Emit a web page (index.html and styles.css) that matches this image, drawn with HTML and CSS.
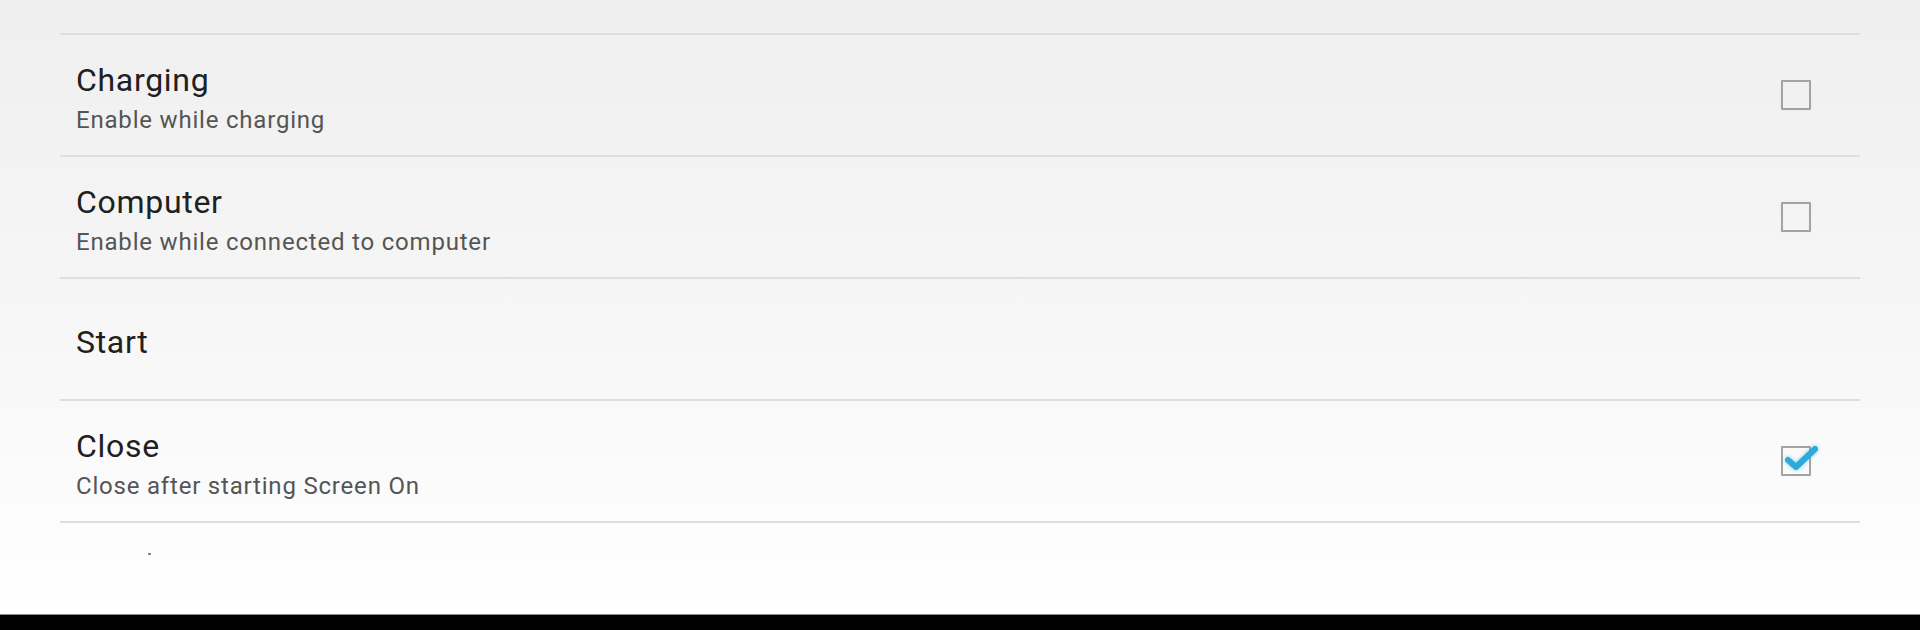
FILE: index.html
```html
<!DOCTYPE html>
<html>
<head>
<meta charset="utf-8">
<link rel="stylesheet" href="styles.css">
</head>
<body>
<div class="screen">
  <div class="content">
    <ul class="prefs">
      <li class="pref">
        <div class="text">
          <div class="title">Charging</div>
          <div class="summary">Enable while charging</div>
        </div>
        <div class="checkbox"></div>
      </li>
      <li class="pref">
        <div class="text">
          <div class="title">Computer</div>
          <div class="summary">Enable while connected to computer</div>
        </div>
        <div class="checkbox"></div>
      </li>
      <li class="pref">
        <div class="text">
          <div class="title">Start</div>
        </div>
      </li>
      <li class="pref">
        <div class="text">
          <div class="title">Close</div>
          <div class="summary">Close after starting Screen On</div>
        </div>
        <div class="checkbox checked">
          <svg class="check" width="42" height="36" viewBox="0 0 42 36">
            <path d="M7 16 L15 23 L34 5" fill="none" stroke="#2ea9dc" stroke-width="6" stroke-linecap="round" stroke-linejoin="round"/>
          </svg>
        </div>
      </li>
      <li class="pref partial">
        <span class="dot"></span>
      </li>
    </ul>
  </div>
  <div class="navbar"></div>
</div>
</body>
</html>
```
FILE: styles.css
```css
html, body {
  margin: 0;
  padding: 0;
}
body {
  width: 1920px;
  height: 630px;
  overflow: hidden;
  font-family: Roboto, "Noto Sans", sans-serif;
}
.screen {
  display: flex;
  flex-direction: column;
  height: 630px;
}
.content {
  height: 614px;
  overflow: hidden;
  background: linear-gradient(180deg, #efefef 0%, #f6f6f6 50%, #ffffff 100%);
  padding-top: 33px;
  box-sizing: border-box;
}
.navbar {
  height: 16px;
  background: #000;
  border-top: 1px solid #8c8c8c;
  box-sizing: border-box;
}
.prefs {
  list-style: none;
  margin: 0 60px;
  padding: 0;
  border-top: 2px solid #dedede;
}
.pref {
  height: 120px;
  border-bottom: 2px solid #dedede;
  display: flex;
  align-items: center;
  padding-left: 16px;
  padding-right: 49px;
}
.text {
  flex: 1;
  padding-top: 6px;
}
.title {
  font-size: 32px;
  line-height: 40px;
  letter-spacing: 0.7px;
  color: #202020;
}
.summary {
  font-size: 24px;
  line-height: 32px;
  letter-spacing: 0.8px;
  color: #555555;
  margin-top: 4px;
}
.checkbox {
  width: 30px;
  height: 30px;
  box-sizing: border-box;
  border: 2px solid #a3a3a3;
  border-radius: 1px;
  position: relative;
  box-shadow: 0 0 1px rgba(0,0,0,0.15);
}
.check {
  position: absolute;
  left: -2px;
  top: -4px;
  filter: drop-shadow(0 0 2px rgba(51,181,229,0.6));
}
.partial {
  border-bottom: none;
  align-items: flex-start;
}
.dot {
  display: block;
  width: 3px;
  height: 2px;
  margin-left: 72px;
  margin-top: 30px;
  background: #888;
}
```
